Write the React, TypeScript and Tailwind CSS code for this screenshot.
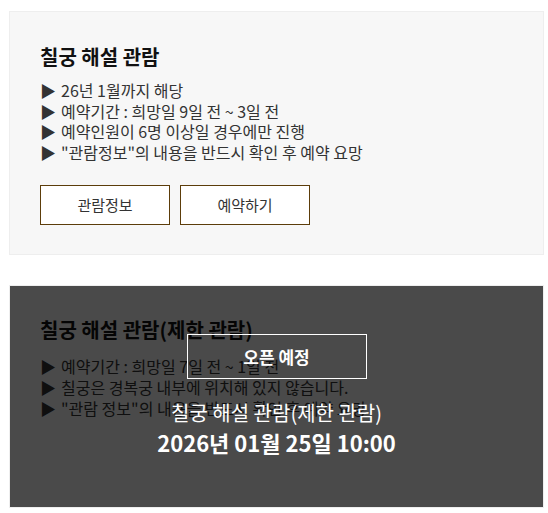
import React from "react";

const font = { fontFamily: '"Noto Sans CJK KR", "Noto Sans", sans-serif' };

function Line({ children }: { children: React.ReactNode }) {
  return (
    <li className="flex">
      <span className="mr-[5px]">▶</span>
      <span>{children}</span>
    </li>
  );
}

export default function App() {
  return (
    <div className="w-[548px] h-[513px] bg-white" style={font}>
      <div className="pt-[11px] pl-[9px] flex flex-col gap-[30px]">
        {/* Card 1 */}
        <div className="w-[535px] h-[244px] border border-[#eeeeee] bg-[#f7f7f7] px-[30px] pt-[31px]">
          <h3 className="text-[20px] font-bold text-[#111111] leading-[28px]">칠궁 해설 관람</h3>
          <ul className="mt-[9px] text-[16px] leading-[20.5px] text-[#333333]">
            <Line>26년 1월까지 해당</Line>
            <Line>예약기간 : 희망일 9일 전 ~ 3일 전</Line>
            <Line>예약인원이 6명 이상일 경우에만 진행</Line>
            <Line>"관람정보"의 내용을 반드시 확인 후 예약 요망</Line>
          </ul>
          <div className="mt-[23px] flex gap-[10px]">
            <button className="w-[130px] h-[40px] border border-[#5c3d0a] bg-white text-[15px] text-[#333333]">관람정보</button>
            <button className="w-[130px] h-[40px] border border-[#5c3d0a] bg-white text-[15px] text-[#333333]">예약하기</button>
          </div>
        </div>

        {/* Card 2 */}
        <div className="w-[535px] h-[223px] border border-[#eeeeee] bg-[#f7f7f7] relative">
          <div className="px-[30px] pt-[30px]">
            <h3 className="text-[20px] font-bold text-[#111111] leading-[28px]">칠궁 해설 관람(제한 관람)</h3>
            <ul className="mt-[12px] text-[16px] leading-[21px] text-[#333333]">
              <Line>예약기간 : 희망일 7일 전 ~ 1일 전</Line>
              <Line>칠궁은 경복궁 내부에 위치해 있지 않습니다.</Line>
              <Line>"관람 정보"의 내용을 반드시 확인 후 예약 요망</Line>
            </ul>
          </div>
          <div className="absolute inset-0 bg-black/70 flex flex-col items-center pt-[48px] text-white">
            <div className="w-[180px] h-[45px] border border-white flex items-center justify-center text-[17px] font-bold">
              오픈 예정
            </div>
            <p className="mt-[20px] text-[20px] leading-[28px]">칠궁 해설 관람(제한 관람)</p>
            <p className="text-[22px] font-bold leading-[30px]">2026년 01월 25일 10:00</p>
          </div>
        </div>
      </div>
    </div>
  );
}
